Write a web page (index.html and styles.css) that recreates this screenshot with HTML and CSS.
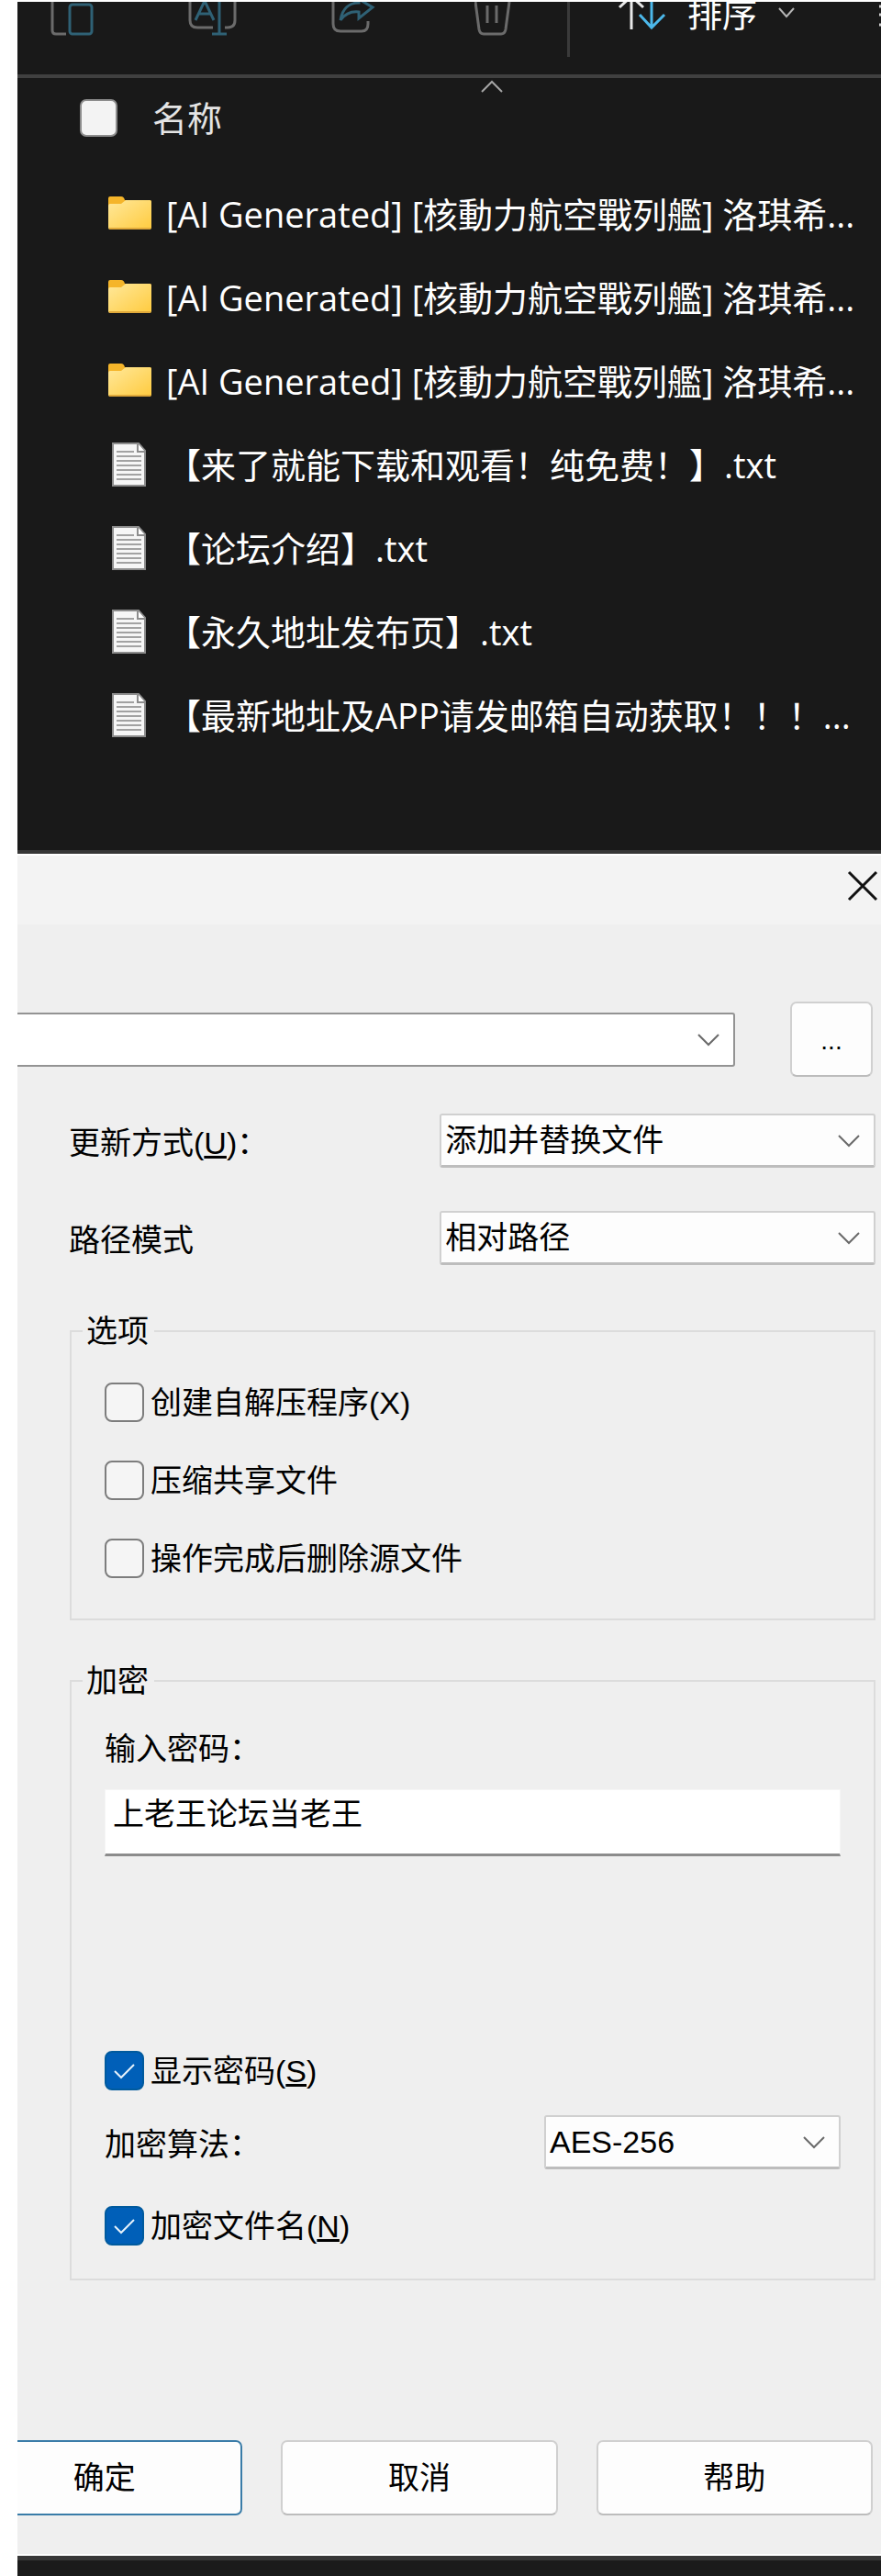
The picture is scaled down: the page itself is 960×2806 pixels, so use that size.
FILE: index.html
```html
<!DOCTYPE html>
<html lang="zh-CN">
<head>
    <meta charset="UTF-8">
    <meta name="viewport" content="width=device-width, initial-scale=1.0">
    <title>压缩文件</title>
    <link rel="stylesheet" href="styles.css">
</head>
<body>
    <div class="window">
        <div class="explorer">
            <div class="toolbar">
                <button class="tool" aria-label="粘贴">
                    <svg width="48" height="42" viewBox="0 0 48 42" fill="none" stroke-width="3">
                        <path d="M2 0V31Q2 35 6 35H17" stroke="#6b6b6b"/>
                        <rect x="21" y="3" width="24" height="32" rx="3" stroke="#2f6175"/>
                    </svg>
                </button>
                <button class="tool" aria-label="重命名">
                    <svg width="54" height="42" viewBox="0 0 54 42" fill="none" stroke-width="3">
                        <path d="M2 0V20Q2 28 10 28H27M40 28H43Q51 28 51 20V0" stroke="#6b6b6b"/>
                        <path d="M8 20L18 -1L28 20M11 13H25M34 0V35M26 35H42" stroke="#2f6175"/>
                    </svg>
                </button>
                <button class="tool" aria-label="共享">
                    <svg width="48" height="42" viewBox="0 0 48 42" fill="none" stroke-width="3">
                        <path d="M2 0V24Q2 32 10 32H33Q40 32 40 24V21" stroke="#6b6b6b"/>
                        <path d="M10 20C12 7 20 1 30 1V-3L45 6L30 18V11C21 10 15 13 10 20Z" stroke="#2f6175"/>
                    </svg>
                </button>
                <button class="tool trash" aria-label="删除">
                    <svg width="40" height="42" viewBox="0 0 40 42" fill="none" stroke="#6b6b6b" stroke-width="3">
                        <path d="M1 0L5 30Q6 35 10 35H29Q33 35 34 30L38 0M14 4V23M24 4V23"/>
                    </svg>
                </button>
                <div class="divider"></div>
                <button class="tool sort">
                    <svg width="54" height="36" viewBox="0 0 54 36" fill="none" stroke-width="3">
                        <path d="M15 30V-6M2 6L15 -6L28 6" stroke="#e8e8e8"/>
                        <path d="M37 0V28M24 14L37 28L51 14" stroke="#4cb8ea"/>
                    </svg>
                    <span>排序</span>
                    <svg width="18" height="36" viewBox="0 0 18 36" fill="none" stroke="#b5b5b5" stroke-width="2">
                        <path d="M1 7L9 16L17 7"/>
                    </svg>
                </button>
                <button class="tool view" aria-label="查看">
                    <svg width="24" height="42" viewBox="0 0 24 42" fill="none" stroke="#d0d0d0" stroke-width="3">
                        <path d="M0 5H24M0 14H24M0 25H24"/>
                    </svg>
                </button>
            </div>

            <div class="list-head">
                <svg class="sort-mark" width="26" height="16" viewBox="0 0 26 16" fill="none" stroke="#a5a5a5" stroke-width="2">
                    <path d="M2 14L13 3L24 14"/>
                </svg>
                <input type="checkbox" id="selectAll" class="select-all">
                <label for="selectAll">名称</label>
            </div>

            <ul class="files">
                <li>
                    <svg width="47" height="40" viewBox="0 0 47 40"><use href="#folder"/></svg>
                    <span>[AI Generated] [核動力航空戰列艦] 洛琪希...</span>
                </li>
                <li>
                    <svg width="47" height="40" viewBox="0 0 47 40"><use href="#folder"/></svg>
                    <span>[AI Generated] [核動力航空戰列艦] 洛琪希...</span>
                </li>
                <li>
                    <svg width="47" height="40" viewBox="0 0 47 40"><use href="#folder"/></svg>
                    <span>[AI Generated] [核動力航空戰列艦] 洛琪希...</span>
                </li>
                <li>
                    <svg width="47" height="48" viewBox="0 0 47 48"><use href="#textfile"/></svg>
                    <span>【来了就能下载和观看！纯免费！】.txt</span>
                </li>
                <li>
                    <svg width="47" height="48" viewBox="0 0 47 48"><use href="#textfile"/></svg>
                    <span>【论坛介绍】.txt</span>
                </li>
                <li>
                    <svg width="47" height="48" viewBox="0 0 47 48"><use href="#textfile"/></svg>
                    <span>【永久地址发布页】.txt</span>
                </li>
                <li>
                    <svg width="47" height="48" viewBox="0 0 47 48"><use href="#textfile"/></svg>
                    <span>【最新地址及APP请发邮箱自动获取！！！...</span>
                </li>
            </ul>
        </div>

        <form class="dialog">
            <div class="titlebar">
                <button type="button" class="close" aria-label="关闭">
                    <svg width="34" height="34" viewBox="0 0 34 34" fill="none" stroke="#111" stroke-width="3">
                        <path d="M2 2L32 32M32 2L2 32"/>
                    </svg>
                </button>
            </div>

            <div class="archive-row">
                <div class="select archive">
                    <select aria-label="压缩包"><option></option></select>
                    <svg class="arrow"><use href="#chevron"/></svg>
                </div>
                <button type="button" class="btn browse">...</button>
            </div>

            <div class="row">
                <label for="update">更新方式(<u>U</u>)：</label>
                <div class="select">
                    <select id="update"><option>添加并替换文件</option></select>
                    <svg class="arrow"><use href="#chevron"/></svg>
                </div>
            </div>
            <div class="row">
                <label for="pathMode">路径模式</label>
                <div class="select">
                    <select id="pathMode"><option>相对路径</option></select>
                    <svg class="arrow"><use href="#chevron"/></svg>
                </div>
            </div>

            <fieldset class="options">
                <legend>选项</legend>
                <div class="check">
                    <input type="checkbox" id="sfx">
                    <label for="sfx">创建自解压程序(X)</label>
                </div>
                <div class="check">
                    <input type="checkbox" id="shared">
                    <label for="shared">压缩共享文件</label>
                </div>
                <div class="check">
                    <input type="checkbox" id="remove">
                    <label for="remove">操作完成后删除源文件</label>
                </div>
            </fieldset>

            <fieldset class="encryption">
                <legend>加密</legend>
                <label for="password" class="password-label">输入密码：</label>
                <input type="text" id="password" class="password" value="上老王论坛当老王">
                <div class="check">
                    <input type="checkbox" id="show" checked>
                    <label for="show">显示密码(<u>S</u>)</label>
                </div>
                <div class="method">
                    <label for="method">加密算法：</label>
                    <div class="select">
                        <select id="method"><option>AES-256</option></select>
                        <svg class="arrow"><use href="#chevron"/></svg>
                    </div>
                </div>
                <div class="check">
                    <input type="checkbox" id="names" checked>
                    <label for="names">加密文件名(<u>N</u>)</label>
                </div>
            </fieldset>

            <div class="buttons">
                <button type="button" class="btn ok">确定</button>
                <button type="button" class="btn">取消</button>
                <button type="button" class="btn">帮助</button>
            </div>
        </form>

        <div class="taskbar"></div>
    </div>

    <!-- shared icons -->
    <svg class="icons" width="0" height="0" aria-hidden="true">
        <defs>
            <linearGradient id="folderFill" x1="0" y1="0" x2="1" y2="1">
                <stop offset="0" stop-color="#ffe89a"/>
                <stop offset="1" stop-color="#ffcb3f"/>
            </linearGradient>
        </defs>
        <symbol id="folder" viewBox="0 0 47 40">
            <path d="M0 3Q0 1 2 1H14Q17 1 18 5H45Q47 5 47 7V20H0Z" fill="#f5b52a"/>
            <path d="M0 11Q0 9 2 9H14L19 5H45Q47 5 47 7V35Q47 37 45 37H2Q0 37 0 35Z" fill="url(#folderFill)"/>
            <path d="M1 36H46" stroke="#e0a93a" stroke-width="2"/>
        </symbol>
        <symbol id="textfile" viewBox="0 0 47 48">
            <path d="M5 1H33L40 9V47H5Z" fill="#f6f6f6" stroke="#8d8d8d" stroke-width="2"/>
            <path d="M32 1V10H40" fill="#fff" stroke="#8d8d8d" stroke-width="2"/>
            <path d="M9 10H28M9 15H36M9 20H36M9 25H36M9 30H36M9 35H36M9 40H36" stroke="#a2a2a2" stroke-width="2"/>
        </symbol>
        <symbol id="chevron" viewBox="0 0 24 16">
            <path d="M1 2L12 13L23 2" fill="none" stroke="#6a6a6a" stroke-width="2"/>
        </symbol>
    </svg>
</body>
</html>
```

FILE: styles.css
```css
* {
    box-sizing: border-box;
}

body {
    margin: 0;
    background-color: #fff;
    font-family: "Liberation Sans", "Noto Sans CJK SC", sans-serif;
    font-size: 34px;
    line-height: 44px;
    color: #000;
    text-spacing-trim: space-all;
}

button, select, input {
    margin: 0;
    font: inherit;
    color: inherit;
    text-spacing-trim: inherit;
}

.window {
    display: flex;
    flex-direction: column;
    min-height: 100vh;
    padding: 2px 0 0 19px;
    overflow: hidden;
}

/* file list */
.explorer {
    background-color: #191919;
    color: #fff;
    font-family: "Open Sans", "Noto Sans CJK SC", sans-serif;
    font-size: 38px;
    border-bottom: 4px solid #363636;
}

.toolbar {
    display: flex;
    align-items: flex-start;
    height: 83px;
    padding-left: 36px;
    border-bottom: 4px solid #404040;
    overflow: hidden;
}

.tool {
    display: flex;
    flex-shrink: 0;
    padding: 0;
    margin-right: 102px;
    border: none;
    background: none;
}

.tool svg {
    display: block;
}

.trash {
    margin-left: 6px;
}

.divider {
    flex-shrink: 0;
    width: 3px;
    height: 60px;
    margin-left: -41px;
    margin-right: 52px;
    background-color: #3a3a3a;
}

.sort {
    margin-right: 92px;
}

.sort span {
    margin: -10px 23px 0 22px;
}

.view {
    margin-right: 0;
}

.list-head {
    position: relative;
    display: flex;
    align-items: center;
    gap: 38px;
    height: 86px;
    padding-left: 68px;
    color: #e4e4e4;
}

.sort-mark {
    position: absolute;
    top: 1px;
    left: calc(50% + 33px);
}

.select-all {
    appearance: none;
    width: 41px;
    height: 41px;
    border: 2px solid #8c8c8c;
    border-radius: 7px;
    background-color: #f3f3f3;
}

.files {
    list-style: none;
    margin: 0;
    padding: 16px 0 102px 99px;
}

.files li {
    display: flex;
    align-items: center;
    gap: 16px;
    height: 91px;
    white-space: nowrap;
}

.files svg {
    flex-shrink: 0;
}

/* archive dialog */
.dialog {
    border-top: 2px solid #fff;
    border-bottom: 2px solid #fff;
    background-color: #efefef;
    overflow: hidden;
}

.titlebar {
    display: flex;
    justify-content: flex-end;
    height: 75px;
    padding: 16px 3px 0 0;
    background-color: #f3f3f3;
}

.close {
    height: 34px;
    padding: 0;
    border: none;
    background: none;
}

.close svg {
    display: block;
}

.select {
    position: relative;
    height: 59px;
}

.select select {
    appearance: none;
    display: block;
    width: 100%;
    height: 100%;
    padding: 0 60px 0 4px;
    border: 2px solid #d0d0d0;
    border-bottom: 3px solid #bdbdbd;
    border-radius: 3px;
    background-color: #fdfdfd;
}

.arrow {
    position: absolute;
    top: 22px;
    right: 17px;
    width: 24px;
    height: 16px;
    pointer-events: none;
}

.archive-row {
    display: flex;
    align-items: center;
    gap: 60px;
    padding: 84px 9px 0 0;
}

.archive {
    flex: 1;
    margin-left: -8px;
}

.archive select {
    border: 2px solid #939393;
    background-color: #fff;
}

.btn {
    flex: 1;
    height: 82px;
    padding: 0;
    border: 2px solid #d0d0d0;
    border-bottom-color: #bcbcbc;
    border-radius: 7px;
    background-color: #fdfdfd;
}

.browse {
    flex: none;
    width: 90px;
    padding-top: 4px;
    font-size: 28px;
}

.row {
    display: flex;
    align-items: center;
    justify-content: space-between;
    margin-bottom: 47px;
    padding: 0 6px 0 56px;
}

.archive-row + .row {
    margin-top: 40px;
}

.row label {
    padding-top: 4px;
}

.row .select {
    width: 54%;
}

fieldset {
    min-width: 0;
    margin: 0 6px 0 57px;
    border: 2px solid #dcdcdc;
}

legend {
    padding: 0 6px 0 4px;
}

.options {
    margin-top: 50px;
    padding: 34px 36px 44px 12px;
}

.check {
    display: flex;
    align-items: center;
    gap: 7px;
    height: 43px;
}

.options .check {
    margin-left: 24px;
}

.options .check + .check {
    margin-top: 42px;
}

.check input {
    appearance: none;
    width: 43px;
    height: 43px;
    border: 2px solid #7d7d7d;
    border-radius: 8px;
    background-color: #f5f5f5;
}

.check input:checked {
    border-color: #005a9e;
    background: #005fb8 url("data:image/svg+xml,%3Csvg xmlns='http://www.w3.org/2000/svg' viewBox='0 0 39 39'%3E%3Cpath d='M9 20L16 27L30 13' fill='none' stroke='%23e6f2fb' stroke-width='2'/%3E%3C/svg%3E") center / 39px 39px no-repeat;
}

.encryption {
    margin-top: 44px;
    padding: 30px 36px 36px;
}

.encryption legend {
    margin-left: -24px;
}

.password-label {
    display: block;
}

.password {
    display: block;
    width: 100%;
    height: 73px;
    margin: 22px 0 212px;
    padding: 0 8px 22px;
    border: 1px solid #f5f5f5;
    border-bottom: 3px solid #8c8c8c;
    background-color: #fff;
}

.method {
    display: flex;
    align-items: center;
    justify-content: space-between;
    margin: 27px 0 40px;
}

.method label {
    padding-top: 4px;
}

.method .select {
    width: 323px;
}

.buttons {
    display: flex;
    gap: 42px;
    margin-left: -56px;
    padding: 174px 9px 42px 0;
}

.ok {
    border-color: #3a7ca8;
}

/* strip under the dialog */
.taskbar {
    flex: 1;
    min-height: 20px;
    border-top: 5px solid #383838;
    background-color: #1b1b1b;
}

.icons {
    position: absolute;
}
```
